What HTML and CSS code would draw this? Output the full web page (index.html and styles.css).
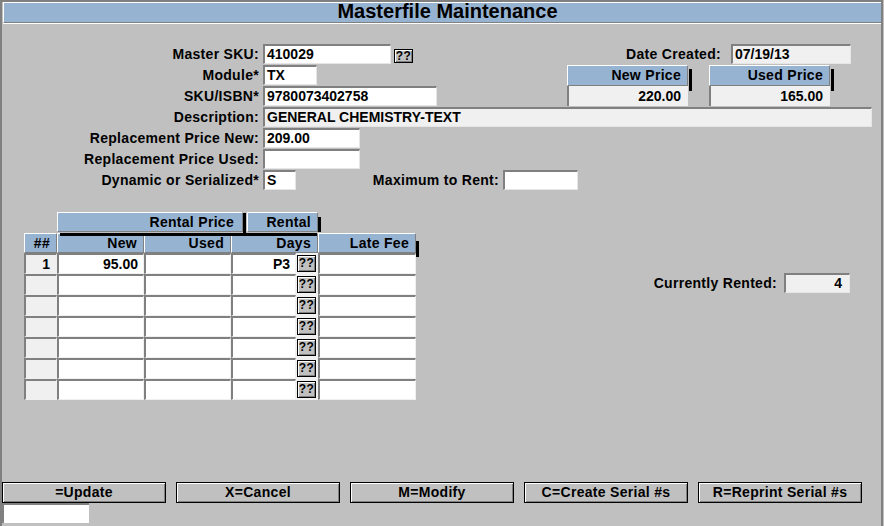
FILE: index.html
```html
<!DOCTYPE html>
<html>
<head>
<meta charset="utf-8">
<title>Masterfile Maintenance</title>
<link rel="stylesheet" href="styles.css">
</head>
<body>
<div class="frame">
  <div class="title">Masterfile Maintenance</div>

  <div class="form">
    <div class="row">
      <span class="lbl">Master SKU:</span>
      <span class="fld w128">410029</span>
      <span class="qbtn top">??</span>
      <span class="lbl date-lbl">Date Created:</span>
      <span class="fld ro w120">07/19/13</span>
    </div>

    <div class="pair">
      <div class="pair-left">
        <div class="row">
          <span class="lbl">Module*</span>
          <span class="fld w54">TX</span>
        </div>
        <div class="row">
          <span class="lbl">SKU/ISBN*</span>
          <span class="fld w174">9780073402758</span>
        </div>
      </div>
      <div class="price">
        <div class="phead">New Price</div>
        <div class="pval">220.00</div>
      </div>
      <div class="price price-used">
        <div class="phead">Used Price</div>
        <div class="pval">165.00</div>
      </div>
    </div>

    <div class="row">
      <span class="lbl">Description:</span>
      <span class="fld ro w609">GENERAL CHEMISTRY-TEXT</span>
    </div>
    <div class="row">
      <span class="lbl">Replacement Price New:</span>
      <span class="fld w97">209.00</span>
    </div>
    <div class="row">
      <span class="lbl">Replacement Price Used:</span>
      <span class="fld w97"></span>
    </div>
    <div class="row">
      <span class="lbl">Dynamic or Serialized*</span>
      <span class="fld w33">S</span>
      <span class="lbl mx-lbl">Maximum to Rent:</span>
      <span class="fld w75"></span>
    </div>
  </div>

  <div class="lower">
    <div class="tbl">
      <div class="h1">
        <div class="h1-spacer"></div>
        <div class="hc rp">Rental Price</div>
        <div class="hc rn">Rental</div>
      </div>
      <div class="h2">
        <div class="hc c0">##</div>
        <div class="hc c1">New</div>
        <div class="hc c2">Used</div>
        <div class="hc c3">Days</div>
        <div class="hc c4 lf">Late Fee</div>
      </div>
      <div class="tr">
        <div class="td c0 ro">1</div>
        <div class="td c1">95.00</div>
        <div class="td c2"></div>
        <div class="td c3d">P3</div>
        <div class="bt"><span class="qbtn">??</span></div>
        <div class="td c4"></div>
      </div>
      <div class="tr">
        <div class="td c0 ro"></div><div class="td c1"></div><div class="td c2"></div><div class="td c3d"></div>
        <div class="bt"><span class="qbtn">??</span></div><div class="td c4"></div>
      </div>
      <div class="tr">
        <div class="td c0 ro"></div><div class="td c1"></div><div class="td c2"></div><div class="td c3d"></div>
        <div class="bt"><span class="qbtn">??</span></div><div class="td c4"></div>
      </div>
      <div class="tr">
        <div class="td c0 ro"></div><div class="td c1"></div><div class="td c2"></div><div class="td c3d"></div>
        <div class="bt"><span class="qbtn">??</span></div><div class="td c4"></div>
      </div>
      <div class="tr">
        <div class="td c0 ro"></div><div class="td c1"></div><div class="td c2"></div><div class="td c3d"></div>
        <div class="bt"><span class="qbtn">??</span></div><div class="td c4"></div>
      </div>
      <div class="tr">
        <div class="td c0 ro"></div><div class="td c1"></div><div class="td c2"></div><div class="td c3d"></div>
        <div class="bt"><span class="qbtn">??</span></div><div class="td c4"></div>
      </div>
      <div class="tr">
        <div class="td c0 ro"></div><div class="td c1"></div><div class="td c2"></div><div class="td c3d"></div>
        <div class="bt"><span class="qbtn">??</span></div><div class="td c4"></div>
      </div>
    </div>

    <div class="rented">
      <span class="rented-lbl">Currently Rented:</span>
      <span class="fld ro w66 r">4</span>
    </div>
  </div>

  <div class="footer">
    <div class="btns">
      <div class="btn">=Update</div>
      <div class="btn">X=Cancel</div>
      <div class="btn">M=Modify</div>
      <div class="btn">C=Create Serial #s</div>
      <div class="btn">R=Reprint Serial #s</div>
    </div>
    <div class="cmd"></div>
  </div>
</div>
</body>
</html>
```

FILE: styles.css
```css
* { box-sizing: border-box; }
html, body { margin: 0; padding: 0; }
body {
  background: #c0c0c0;
  width: 884px;
  height: 526px;
  overflow: hidden;
  font-family: "Liberation Sans", Arial, sans-serif;
  font-weight: bold;
  font-size: 14px;
  color: #000;
}
.frame {
  width: 883px;
  height: 526px;
  border-top: 2px solid #808080;
  border-left: 2px solid #808080;
  border-right: 2px solid #808080;
  padding-bottom: 3px;
  display: flex;
  flex-direction: column;
}
.title {
  margin-left: 1px;
  height: 21px;
  border-top: 1px solid #fff;
  border-left: 1px solid #fff;
  border-bottom: 1px solid #808080;
  box-shadow: 0 1px 0 #fff;
  background: #96b3d2;
  text-align: center;
  padding-left: 10px;
  font-size: 20px;
  line-height: 17px;
}

/* form rows */
.form {
  display: flex;
  flex-direction: column;
  gap: 1px;
  margin-top: 21px;
}
.row {
  display: flex;
  align-items: flex-start;
  height: 20px;
}
.lbl {
  width: 257px;
  margin-right: 4px;
  text-align: right;
  line-height: 20px;
  letter-spacing: 0.3px;
  white-space: nowrap;
}
.fld {
  display: block;
  height: 20px;
  border-top: 2px solid #808080;
  border-left: 2px solid #808080;
  border-right: 1px solid #e6e6e6;
  border-bottom: 1px solid #e6e6e6;
  background: #fff;
  padding: 0 2px;
  line-height: 17px;
  white-space: nowrap;
  overflow: hidden;
}
.ro { background: #f0f0f0; }
.r { text-align: right; padding-right: 7px; }
.w128 { width: 128px; }
.w120 { width: 120px; }
.w54 { width: 54px; }
.w174 { width: 174px; }
.w609 { width: 609px; }
.w97 { width: 97px; }
.w33 { width: 33px; }
.w75 { width: 75px; }
.w66 { width: 66px; }

.qbtn {
  display: block;
  width: 19px;
  height: 16px;
  border: 1px solid #000;
  background: #c0c0c0;
  box-shadow: inset 1px 1px #fff, inset -1px -1px #808080;
  font-size: 12px;
  line-height: 14px;
  text-align: center;
  letter-spacing: 0.5px;
}
.qbtn.top {
  margin-left: 3px;
  margin-top: 5px;
  height: 14px;
  line-height: 12px;
}
.date-lbl {
  width: auto;
  margin-left: auto;
  margin-right: 10px;
}
.date-lbl + .fld { margin-right: 30px; }
.mx-lbl { width: 203px; }

/* price boxes */
.pair {
  display: flex;
  height: 41px;
}
.pair-left {
  width: 565px;
  display: flex;
  flex-direction: column;
  gap: 1px;
}
.price {
  width: 121px;
}
.price-used { margin-left: 21px; }
.phead {
  position: relative;
  height: 21px;
  background: #96b3d2;
  border-top: 1px solid #fff;
  border-left: 1px solid #fff;
  border-right: 1px solid #808080;
  border-bottom: 1px solid #808080;
  text-align: right;
  padding-right: 6px;
  line-height: 18px;
  letter-spacing: 0.3px;
}
.phead::after {
  content: "";
  position: absolute;
  right: -5px;
  top: 3px;
  width: 3px;
  height: 22px;
  background: #000;
}
.pval {
  height: 20px;
  background: #f0f0f0;
  border-left: 2px solid #808080;
  text-align: right;
  padding-right: 7px;
  line-height: 21px;
}

/* lower area */
.lower {
  display: flex;
  align-items: flex-start;
  margin-top: 22px;
}
.tbl {
  margin-left: 22px;
  width: 392px;
}
.h1 {
  position: relative;
  display: flex;
  height: 21px;
}
.h1::after {
  content: "";
  position: absolute;
  left: 36px;
  top: 21px;
  width: 257px;
  height: 3px;
  background: #000;
  z-index: 2;
}
.h1-spacer { width: 33px; }
.h2 {
  display: flex;
  height: 20px;
}
.hc {
  position: relative;
  height: 20px;
  background: #96b3d2;
  border-top: 1px solid #fff;
  border-left: 1px solid #fff;
  border-right: 1px solid #808080;
  border-bottom: 1px solid #808080;
  text-align: right;
  padding-right: 6px;
  line-height: 18px;
  letter-spacing: 0.3px;
  white-space: nowrap;
}
.rp { width: 186px; padding-right: 8px; }
.rn { width: 71px; margin-left: 4px; }
.rp::after, .rn::after, .lf::after {
  content: "";
  position: absolute;
  right: -4px;
  width: 3px;
  background: #000;
}
.rp::after { top: 0; height: 24px; }
.rn::after { top: 4px; height: 15px; }
.lf::after { top: 7px; height: 16px; }

.c0 { width: 33px; }
.c1 { width: 87px; }
.c2 { width: 87px; }
.c3 { width: 87px; }
.c3d { width: 65px; }
.c4 { width: 98px; }
.tr {
  display: flex;
  height: 21px;
}
.td {
  height: 21px;
  background: #fff;
  border-top: 2px solid #808080;
  border-left: 2px solid #808080;
  border-right: 1px solid #f0f0f0;
  border-bottom: 1px solid #f0f0f0;
  text-align: right;
  padding-right: 5px;
  line-height: 18px;
  white-space: nowrap;
}
.td.ro { background: #f0f0f0; padding-right: 6px; }
.bt {
  width: 22px;
  height: 21px;
  background: #f0f0f0;
  padding: 2px 0 0 1px;
}
.bt .qbtn { height: 17px; line-height: 15px; }

.rented {
  display: flex;
  margin-left: auto;
  margin-right: 31px;
  margin-top: 61px;
  height: 20px;
}
.rented-lbl {
  line-height: 20px;
  margin-right: 7px;
  letter-spacing: 0.3px;
}

/* footer */
.footer {
  margin-top: auto;
}
.btns {
  display: flex;
  gap: 10px;
}
.btn {
  width: 164px;
  height: 21px;
  border: 1px solid #000;
  background: #c0c0c0;
  box-shadow: inset 1px 1px #fff, inset -1px -1px #808080;
  text-align: center;
  line-height: 19px;
  letter-spacing: 0.3px;
}
.cmd {
  width: 87px;
  height: 20px;
  background: #fff;
  border-top: 2px solid #808080;
  border-left: 2px solid #808080;
}
```
